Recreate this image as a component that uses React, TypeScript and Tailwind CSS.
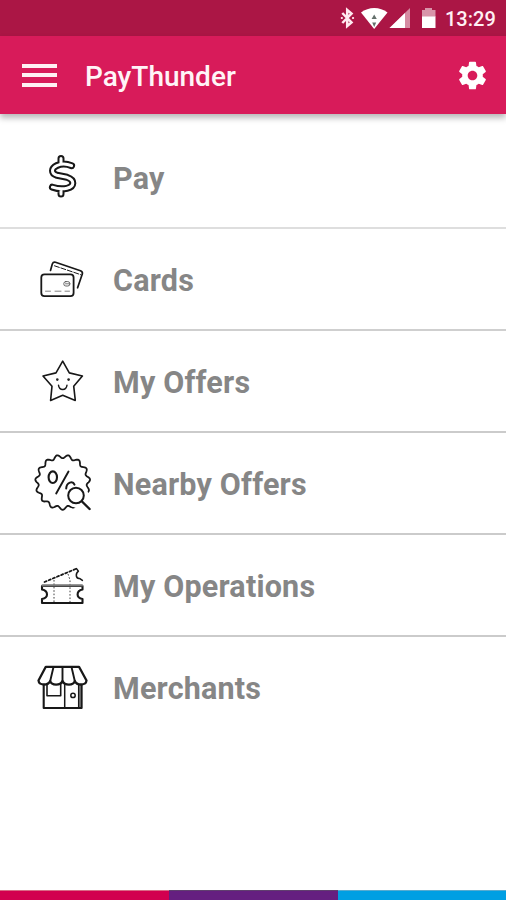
import React from "react";

function scallop(cx: number, cy: number) {
  const pts: string[] = [];
  for (let i = 0; i < 240; i++) {
    const a = (i / 240) * Math.PI * 2;
    const r = 25.8 + 1.7 * Math.cos(15 * (a - Math.PI / 2));
    pts.push(`${(cx + r * Math.cos(a)).toFixed(2)},${(cy + r * Math.sin(a)).toFixed(2)}`);
  }
  return pts.join(" ");
}

function RowIcon({ top, children }: { top: number; children: React.ReactNode }) {
  return (
    <svg
      className="h-[70px] w-[70px] shrink-0"
      viewBox={`28 ${top} 70 70`}
      fill="none"
      stroke="#181818"
      strokeWidth="1.8"
      strokeLinecap="round"
      strokeLinejoin="round"
    >
      {children}
    </svg>
  );
}

const dollar = "M71.6 165.7C67 163.8 61 163.6 57 165.5C51 168.3 51 173.5 57 175.3L67 177.3C75 180 74.5 186.5 67 188.3C62 189.4 57 188.8 52.4 187.2M61 158.4V164M61 189V194";

const items = [
  {
    label: "Pay",
    line: "border-[#dedede]",
    icon: (
      <RowIcon top={142}>
        <path d={dollar} strokeWidth="7" />
        <path d={dollar} stroke="#fff" strokeWidth="3" />
      </RowIcon>
    ),
  },
  {
    label: "Cards",
    line: "border-[#cfcfcf]",
    icon: (
      <RowIcon top={244}>
        <path d="M50.5 270.5L52.3 264Q53.2 261.6 55.5 262.2L80.5 270.7Q83 271.8 82.3 274L77.6 287.8" strokeWidth="1.7" />
        <path d="M54.5 265.8L80.5 274.6" strokeWidth="1" strokeDasharray="5 1.8" />
        <rect x="41.3" y="274.4" width="32.3" height="21.8" rx="3.2" fill="#fff" />
        <rect x="63.8" y="281.6" width="6" height="4.4" rx="2" strokeWidth="0.9" stroke="#555" />
        <path d="M65.5 283.8H70" strokeWidth="0.9" stroke="#666" />
        <path d="M45.5 291.2H50.5M55 291.2H61M65 291.2H69.5" strokeWidth="0.9" stroke="#777" />
      </RowIcon>
    ),
  },
  {
    label: "My Offers",
    line: "border-[#cbcbcb]",
    icon: (
      <RowIcon top={346}>
        <path d="M62.7 361.2L69.3 372.9L82.4 376L73.7 386.2L75.3 400.4L62.7 395.2L50.6 400.4L52 386.2L43 376L56 372.9Z" strokeWidth="1.6" />
        <circle cx="57.3" cy="379.6" r="1.3" fill="#222" stroke="none" />
        <circle cx="68.6" cy="379.6" r="1.3" fill="#222" stroke="none" />
        <path d="M58.5 385.2C59.2 391 66.2 391 67 385.2" strokeWidth="1.4" />
      </RowIcon>
    ),
  },
  {
    label: "Nearby Offers",
    line: "border-[#cbcbcb]",
    icon: (
      <RowIcon top={448}>
        <polygon points={scallop(62.7, 482.3)} strokeWidth="1.8" />
        <ellipse cx="52.8" cy="477.2" rx="4.2" ry="5.8" strokeWidth="2.1" />
        <path d="M68.5 471.5L56.2 493.5" strokeWidth="1.9" />
        <circle cx="77" cy="496" r="11.5" fill="#fff" stroke="none" />
        <path d="M66.2 488.5C66.4 481.8 73 480.7 74.5 484.6" strokeWidth="2" />
        <circle cx="76" cy="495.5" r="7.8" fill="#fff" strokeWidth="2" />
        <path d="M82 501.5L89.6 509" strokeWidth="2.4" />
      </RowIcon>
    ),
  },
  {
    label: "My Operations",
    line: "border-[#cbcbcb]",
    icon: (
      <RowIcon top={550}>
        <path d="M44.5 582L76.5 568.6" strokeWidth="1.8" strokeDasharray="2.2 2.3" />
        <path d="M76.5 568.6L78.4 571.2C75 574 76 578.8 79.5 578.4L82.4 580.4" strokeWidth="1.5" />
        <path d="M68 574L70 580V602M54 580V602" strokeWidth="1" strokeLinecap="butt" strokeDasharray="1.6 1.8" stroke="#444" />
        <path d="M42 589.5V586H82.5V589.5Q77.6 590.5 77.6 594.5Q77.6 598 82.5 599V603H42V599Q47 598 47 594.5Q47 590.5 42 589.5Z" strokeWidth="2.1" />
        <path d="M42.5 585.4H82" stroke="#777" strokeWidth="2.2" />
      </RowIcon>
    ),
  },
  {
    label: "Merchants",
    line: "border-transparent",
    icon: (
      <RowIcon top={652}>
        <rect x="78.5" y="684" width="3" height="23" fill="#aaa" stroke="none" />
        <path d="M43.7 683V708H81.6V683" strokeWidth="2.1" />
        <path d="M47 684V695.7H60.7V684" strokeWidth="1.6" />
        <path d="M64.7 684V708M78.7 684V707" strokeWidth="1.5" />
        <circle cx="73" cy="695.4" r="2.2" strokeWidth="1.5" />
        <path
          d="M45.8 666.8H79L86.5 680.5C86 685.5 77 686 74.8 681C73.5 685.8 64.5 685.8 62.5 681C60.5 685.8 51.5 685.8 50.2 681C48 686 39 685.5 38.5 680.5Z"
          fill="#fff"
          strokeWidth="2.3"
        />
        <path d="M53.5 667L50.2 681M62.5 667V681M71.5 667L74.8 681" strokeWidth="1.9" />
      </RowIcon>
    ),
  },
];

function StatusBar() {
  return (
    <div className="flex h-[36px] items-center justify-end bg-[#ab1645] pr-[11px]">
      <svg className="h-9 w-[110px] shrink-0" viewBox="335 0 110 36" fill="none">
        <path d="M342.3 13L351.5 22.5L347.2 26V10L351.5 13.5L342.3 23" stroke="#ffeaf0" strokeWidth="2.5" />
        <path d="M341.8 18h.1M353 18h.1" stroke="#ffeaf0" strokeWidth="2.2" strokeLinecap="round" />
        <path d="M361 12.5C368.5 6.5 380 6.5 387.5 12.5L374.2 29Z" fill="#fff" />
        <path d="M374.2 14.5L376.8 19H371.6ZM374.2 27L372.2 22.5H376.2Z" fill="#64706c" />
        <path d="M389.5 28L410 8V28Z" fill="#d58ba2" />
        <path d="M389.5 28L405 13V28Z" fill="#fff" />
        <path d="M422 10H425V8H432V10H435.5V17H422Z" fill="#d894a9" />
        <path d="M422 16.5H435.5V28H422Z" fill="#fff" />
      </svg>
      <span className="w-[50px] whitespace-nowrap pt-[2px] text-[20px] font-medium leading-[34px] text-[#fff0f4]">13:29</span>
    </div>
  );
}

export default function App() {
  return (
    <div className="flex h-[900px] w-[506px] flex-col overflow-hidden bg-white font-['Roboto',sans-serif]">
      <StatusBar />
      <header className="relative z-10 flex h-[78px] shrink-0 items-center bg-[#d81b5a] pl-[22px] pr-[17px] shadow-[0_4px_6px_rgba(0,0,0,0.28)]">
        <div className="flex w-[35px] flex-col gap-[5.5px]">
          <div className="h-[4px] bg-[#fff0f4]" />
          <div className="h-[4px] bg-[#fff0f4]" />
          <div className="h-[4px] bg-[#fff0f4]" />
        </div>
        <h1 className="ml-[28px] flex-1 pt-[4px] text-[28px] font-medium leading-8 text-[#fff4f7]">PayThunder</h1>
        <svg className="h-[33px] w-[33px]" viewBox="0 0 24 24" fill="#fff">
          <path d="M19.43 12.98c.04-.32.07-.64.07-.98s-.03-.66-.07-.98l2.11-1.65c.19-.15.24-.42.12-.64l-2-3.46c-.12-.22-.39-.3-.61-.22l-2.49 1c-.52-.4-1.08-.73-1.69-.98l-.38-2.65C14.46 2.18 14.25 2 14 2h-4c-.25 0-.46.18-.49.42l-.38 2.65c-.61.25-1.17.59-1.69.98l-2.49-1c-.23-.09-.49 0-.61.22l-2 3.46c-.13.22-.07.49.12.64l2.11 1.65c-.04.32-.07.65-.07.98s.03.66.07.98l-2.11 1.65c-.19.15-.24.42-.12.64l2 3.46c.12.22.39.3.61.22l2.49-1c.52.4 1.08.73 1.69.98l.38 2.65c.03.24.24.42.49.42h4c.25 0 .46-.18.49-.42l.38-2.65c.61-.25 1.17-.59 1.69-.98l2.49 1c.23.09.49 0 .61-.22l2-3.46c.12-.22.07-.49-.12-.64l-2.11-1.65zM12 15.5c-1.93 0-3.5-1.57-3.5-3.5s1.57-3.5 3.5-3.5 3.5 1.57 3.5 3.5-1.57 3.5-3.5 3.5z" />
        </svg>
      </header>
      <ul className="flex-1 pt-[13px]">
        {items.map((item) => (
          <li key={item.label} className={`flex h-[102px] items-center border-b-2 pl-[28px] ${item.line}`}>
            {item.icon}
            <span className="ml-[15px] pt-[4px] text-[30.5px] font-bold leading-9 tracking-[0.2px] text-[#868686]">{item.label}</span>
          </li>
        ))}
      </ul>
      <footer className="flex h-[10px] shrink-0">
        <div className="w-[169px] border-t border-[#d96b86] bg-[#d2004f]" />
        <div className="w-[169px] border-t border-[#60406f] bg-[#651f80]" />
        <div className="w-[168px] border-t border-[#58abd0] bg-[#009fe3]" />
      </footer>
    </div>
  );
}
